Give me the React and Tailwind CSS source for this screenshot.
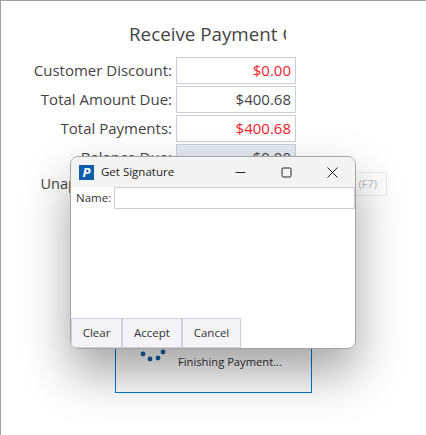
const FONT = 'font-["Open_Sans","Noto_Sans",sans-serif]';

const AmountRow = ({ label, value, red, shaded }) => (
  <div className="flex items-center gap-[4px] h-[27px]">
    <div className="w-[171px] text-right text-[15px] text-[#444] whitespace-nowrap">{label}</div>
    <div
      className={`w-[120px] h-[27px] border border-[#cdcdda] flex items-center justify-end pr-[4px] text-[15px] ${
        shaded ? 'bg-[#e4e9f2]' : 'bg-white'
      } ${red ? 'text-[#f5222d]' : 'text-[#444]'}`}
    >
      {value}
    </div>
  </div>
);

const Spinner = () => (
  <svg width="30" height="30" viewBox="0 0 30 30" className="text-[#1160a8]" fill="currentColor">
    <circle cx="4" cy="7" r="2.4" />
    <circle cx="11" cy="12" r="2.4" />
    <circle cx="19" cy="11" r="2.4" />
    <circle cx="24" cy="5" r="2.4" />
  </svg>
);

const WindowButtons = () => (
  <div className="flex items-center ml-auto text-[#222]">
    <button className="w-[46px] h-[30px] flex items-center justify-center">
      <svg width="11" height="11" viewBox="0 0 11 11" fill="none" stroke="currentColor">
        <path d="M0.5 5.5H10.5" />
      </svg>
    </button>
    <button className="w-[46px] h-[30px] flex items-center justify-center">
      <svg width="11" height="11" viewBox="0 0 11 11" fill="none" stroke="currentColor">
        <rect x="1" y="1" width="9" height="9" rx="1.2" />
      </svg>
    </button>
    <button className="w-[46px] h-[30px] flex items-center justify-center">
      <svg width="11" height="11" viewBox="0 0 11 11" fill="none" stroke="currentColor">
        <path d="M0.5 0.5L10.5 10.5M10.5 0.5L0.5 10.5" />
      </svg>
    </button>
  </div>
);

const SignatureDialog = () => (
  <div className="absolute left-[69px] top-[155px] w-[286px] h-[193px] rounded-[8px] border border-[#a3a3a3] bg-white overflow-hidden flex flex-col">
    <div className="flex items-center h-[30px] pl-[8px] bg-[#f3f3f3] shrink-0">
      <div className="w-[15px] h-[15px] bg-[#0b5ea8] flex items-center justify-center text-white text-[13px] leading-none font-bold italic">
        P
      </div>
      <span className="ml-[7px] text-[11.5px] text-[#222]">Get Signature</span>
      <WindowButtons />
    </div>
    <div className="flex items-center h-[22px] pl-[5px] gap-[3px] shrink-0">
      <span className="text-[11.5px] text-[#333] w-[35px]">Name:</span>
      <div className="flex-1 h-[22px] border border-[#cbcbdc] bg-white" />
    </div>
    <div className="flex-1" />
    <div className="flex h-[30px] shrink-0">
      {[
        ['Clear', 'w-[51px]'],
        ['Accept', 'w-[60px]'],
        ['Cancel', 'w-[59px]'],
      ].map(([name, width]) => (
        <button
          key={name}
          className={`${width} border border-[#cfcfe0] bg-[#f3f3f8] text-[11.5px] text-[#333] flex items-center justify-center`}
        >
          {name}
        </button>
      ))}
    </div>
  </div>
);

export default function App() {
  return (
    <div className={`${FONT} relative w-[426px] h-[435px] box-border border-l border-t border-[#a0a0a0] bg-white overflow-hidden`}>
      <div className="flex flex-col gap-[2px]">
        <div className="ml-[128px] mt-[20px] mb-[7px] w-[157px] h-[27px] overflow-hidden whitespace-nowrap text-[18.8px] leading-[27px] text-[#444]">
          Receive Payment Options
        </div>
        <AmountRow label="Customer Discount:" value="$0.00" red />
        <AmountRow label="Total Amount Due:" value="$400.68" />
        <AmountRow label="Total Payments:" value="$400.68" red />
        <AmountRow label="Balance Due:" value="$0.00" shaded />
        <div className="flex items-center gap-[4px] h-[24px] -mt-px">
          <div className="w-[171px] text-right text-[14.5px] text-[#444] whitespace-nowrap">Unapplied Amount:</div>
          <div className="w-[120px] h-[24px]" />
          <div className="w-[87px] h-[24px] border border-[#e8e8e8] flex items-center justify-end pr-[9px] text-[11px] text-[#bbb]">
            (F7)
          </div>
        </div>
      </div>

      <div className="absolute left-[114px] top-[300px] w-[197px] h-[92px] border border-[#0078d4] bg-white flex items-end">
        <div className="flex items-center h-[50px] pl-[23px] pb-[10px]">
          <Spinner />
          <span className="ml-[9px] text-[11.2px] text-[#333] whitespace-nowrap">Finishing Payment...</span>
        </div>
      </div>

      {/* dimming shadow is drawn by this layer so it falls over the form and the loader */}
      <div className="absolute left-[69px] top-[155px] w-[286px] h-[193px] rounded-[8px] shadow-[0_24px_48px_rgba(0,0,0,0.36)]" />
      <SignatureDialog />
    </div>
  );
}
